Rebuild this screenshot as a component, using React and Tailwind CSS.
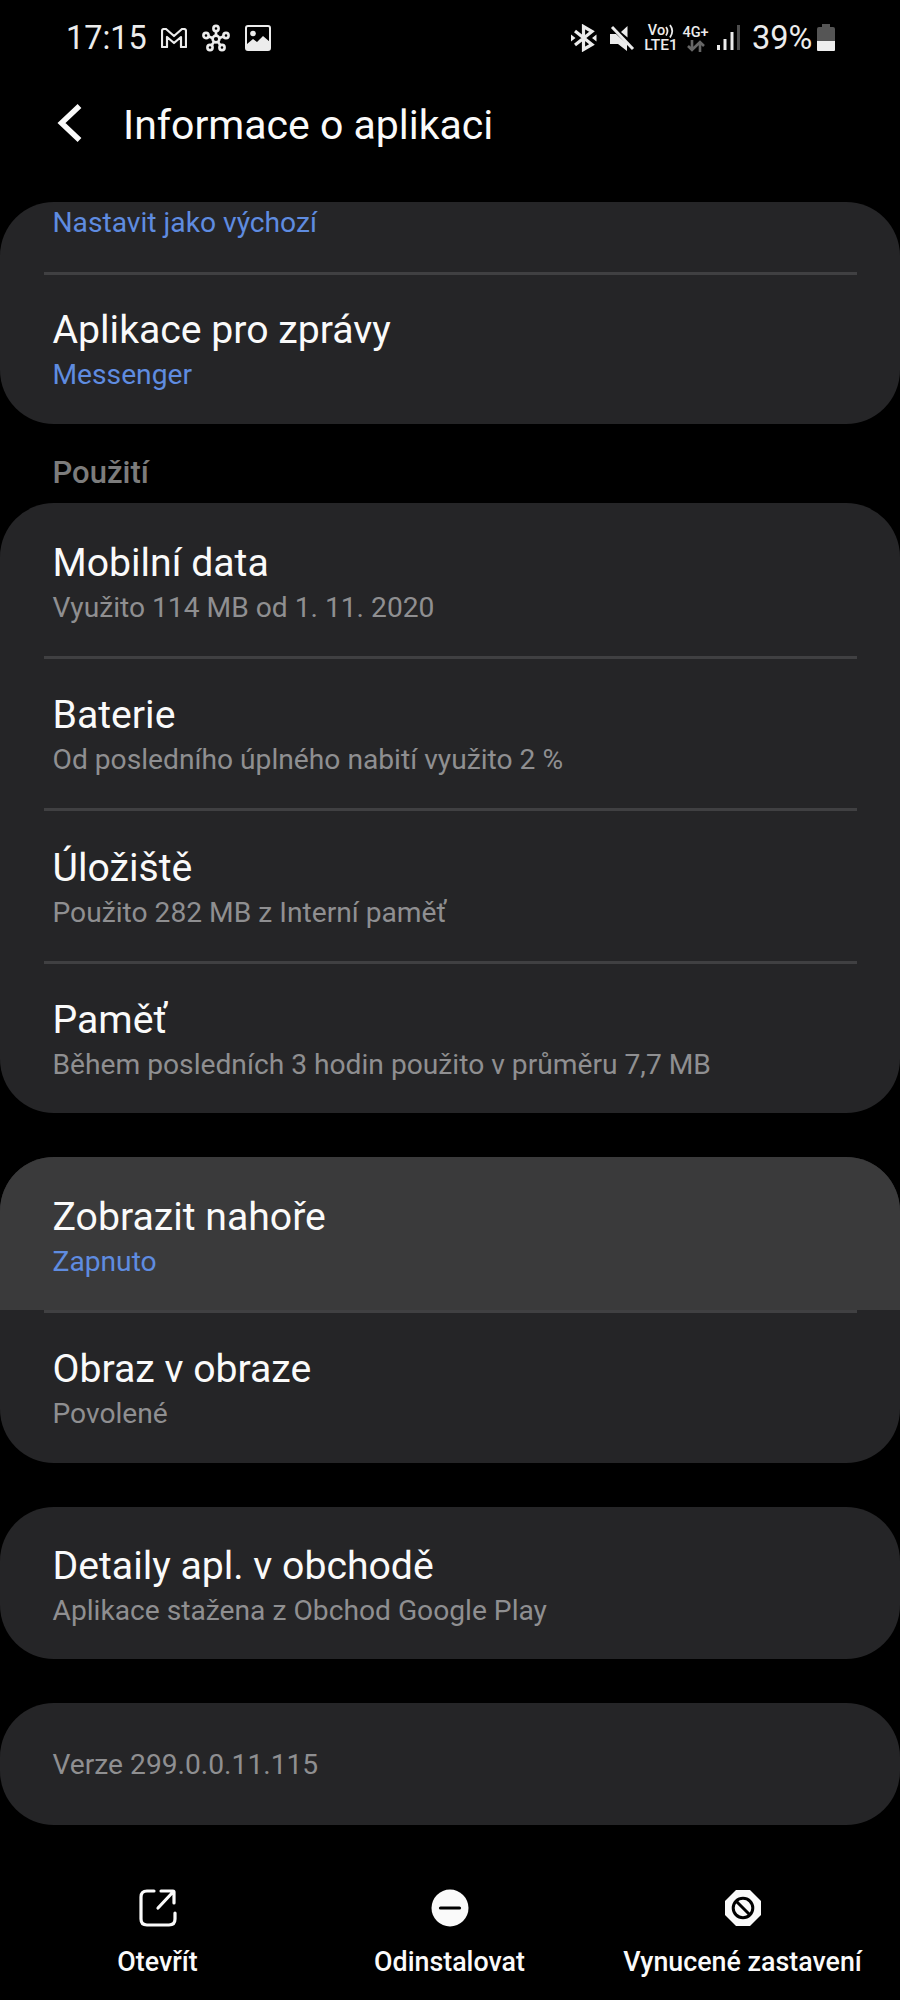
const usage = [
    { title: 'Mobilní data', sub: 'Využito 114 MB od 1. 11. 2020' },
    { title: 'Baterie', sub: 'Od posledního úplného nabití využito 2 %' },
    { title: 'Úložiště', sub: 'Použito 282 MB z Interní paměť' },
    { title: 'Paměť', sub: 'Během posledních 3 hodin použito v průměru 7,7 MB' },
]

function Card({ children, className = '' }) {
    return <section className={`w-full rounded-[54px] bg-[#252527] overflow-hidden ${className}`}>{children}</section>
}

function Divider() {
    return <div className="relative h-[3px] -mb-[3px] ml-[44px] mr-[43px] bg-[#404042]" />
}

function Row({ title, sub, blue, active, className = 'pt-[35.5px]' }) {
    return (
        <div className={`h-[152.5px] pl-[52.5px] ${className} ${active ? 'bg-[#3a3a3b]' : ''}`}>
            <div className="text-[39.2px] leading-[48px] text-[#fafafa]">{title}</div>
            <div className={`mt-px text-[28.2px] leading-[40px] ${blue ? 'text-[#5f8ce0]' : 'text-[#8f8f91]'}`}>{sub}</div>
        </div>
    )
}

function StatusBar() {
    return (
        <div className="h-[76px] flex items-center pl-[66px] pr-[65px] text-[#ececec]">
            <span className="text-[32.4px] leading-[40px] w-[95px]">17:15</span>
            <svg className="w-[26px] h-[20px]" viewBox="0 0 26 20" fill="none" stroke="currentColor" strokeWidth="2.2" strokeLinejoin="round">
                <path d="M1 3Q1 1 3 1H5L13 8L21 1H23Q25 1 25 3V19H20V9L13 15L6 9V19H1Z" />
            </svg>
            <svg className="w-[28px] h-[28px] ml-[15px]" viewBox="0 0 28 28" fill="none" stroke="currentColor" strokeWidth="2.6">
                <circle cx="14" cy="15" r="3.4" />
                <circle cx="14" cy="4.500" r="2.6" />
                <circle cx="4" cy="11.5" r="2.6" />
                <circle cx="24" cy="11.5" r="2.6" />
                <circle cx="8" cy="23.5" r="2.6" />
                <circle cx="20" cy="23.5" r="2.6" />
                <path d="M14 6.5V11.5M6 12.3L10.5 14M22 12.3L17.5 14M9.6 21.3L12 18M18.4 21.3L16 18" />
            </svg>
            <svg className="w-[26px] h-[26px] ml-[15px]" viewBox="0 0 26 26">
                <rect x="1" y="1" width="24" height="24" rx="2" fill="none" stroke="currentColor" strokeWidth="2" />
                <circle cx="8" cy="8.5" r="2.8" fill="currentColor" />
                <path d="M2 19L8 14L12 17L18 11L25 17V24H2Z" fill="currentColor" />
            </svg>
            <div className="flex-1" />
            <svg className="w-[26px] h-[28px]" viewBox="0 0 26 28" fill="none" stroke="currentColor" strokeWidth="3.2">
                <path d="M4 7L21 20.5L12.5 25.5V2.5L21 7.5L4 21" />
                <path d="M0 10.5L4.5 14L0 17.5ZM25.5 10.5L21 14L25.5 17.5Z" fill="currentColor" stroke="none" />
            </svg>
            <svg className="w-[26px] h-[27px] ml-[12px]" viewBox="0 0 26 27" fill="currentColor">
                <path d="M1 9H7L18 19V26L9 19H1Z" />
                <path d="M12 7L18.5 1V12.5Z" />
                <path d="M3 2L24 24" stroke="currentColor" strokeWidth="3" />
            </svg>
            <div className="ml-[9px] w-[34px] flex flex-col items-center font-medium">
                <div className="flex items-center h-[14px] text-[14.5px] leading-[14px]">
                    Vo
                    <svg className="w-[9px] h-[14px]" viewBox="0 0 9 14" fill="none" stroke="currentColor" strokeWidth="1.8">
                        <path d="M1 3Q4 7 1 11.5M5 1Q9.5 7 5 13.5" />
                    </svg>
                </div>
                <div className="text-[15.5px] leading-[15px]">LTE1</div>
            </div>
            <div className="ml-[4px] w-[27px] flex flex-col items-center">
                <span className="text-[14.5px] leading-[15px] font-medium">4G+</span>
                <svg className="w-[18px] h-[12px]" viewBox="0 0 18 12" fill="none" stroke="#666" strokeWidth="2.6">
                    <path d="M5 0V10M1 6L5 10L9 6M13 12V2M9 6L13 2L17 6" />
                </svg>
            </div>
            <svg className="w-[24px] h-[26px] ml-[8px]" viewBox="0 0 24 26" fill="currentColor">
                <rect x="0" y="20" width="3" height="5" />
                <rect x="6.5" y="14" width="3" height="11" />
                <rect x="13.5" y="7" width="3" height="18" />
                <rect x="20" y="0" width="3" height="25" fill="#4d4d4d" />
            </svg>
            <span className="ml-[11px] w-[60px] text-[32.5px] leading-[40px]">39%</span>
            <svg className="w-[18px] h-[28px] ml-[5px]" viewBox="0 0 18 28">
                <path d="M5 0H13V3H16Q18 3 18 5V17H0V5Q0 3 2 3H5Z" fill="#555" />
                <path d="M0 17H18V26Q18 27 17 27H1Q0 27 0 26Z" fill="#eee" />
            </svg>
        </div>
    )
}

function Action({ label, className, children }) {
    return (
        <div className={`flex flex-col items-center ${className}`}>
            <svg className="w-[38px] h-[38px]" viewBox="0 0 38 38">{children}</svg>
            <span className="mt-[19px] text-[26.8px] leading-[32px] font-medium whitespace-nowrap">{label}</span>
        </div>
    )
}

export default function App() {
    return (
        <div className="w-[900px] h-[2000px] bg-black text-[#fafafa] font-['Roboto',sans-serif] overflow-hidden flex flex-col">
            <StatusBar />
            <header className="h-[126px] flex items-start pl-[57px]">
                <svg className="w-[26px] h-[38px] mt-[28px]" viewBox="0 0 26 38" fill="none" stroke="currentColor" strokeWidth="5.5">
                    <path d="M22.5 2L4.5 19L22.5 36" />
                </svg>
                <h1 className="ml-[40px] mt-[24px] text-[41px] leading-[50px]">Informace o aplikaci</h1>
            </header>

            <Card className="h-[222px] shrink-0">
                <div className="h-[70px] pl-[52.5px] text-[28.2px] leading-[42px] text-[#5f8ce0]">Nastavit jako výchozí</div>
                <Divider />
                <Row title="Aplikace pro zprávy" sub="Messenger" blue className="pt-[34px]" />
            </Card>

            <h2 className="h-[79px] shrink-0 pt-[31px] pl-[52.5px] text-[31px] leading-[36px] font-medium text-[#7c7c7c]">Použití</h2>

            <Card className="h-[610px] shrink-0">
                {usage.map((u, i) => (
                    <div key={u.title}>
                        {i > 0 && <Divider />}
                        <Row title={u.title} sub={u.sub} />
                    </div>
                ))}
            </Card>

            <Card className="mt-[44px] h-[306px] shrink-0">
                <Row title="Zobrazit nahoře" sub="Zapnuto" blue active />
                <Divider />
                <Row title="Obraz v obraze" sub="Povolené" />
            </Card>

            <Card className="mt-[44px] h-[152px] shrink-0">
                <Row title="Detaily apl. v obchodě" sub="Aplikace stažena z Obchod Google Play" className="pt-[34.5px]" />
            </Card>

            <Card className="mt-[44px] h-[122px] shrink-0 flex items-center pt-[3px] pl-[52.5px] text-[28.2px] text-[#8f8f91]">
                Verze 299.0.0.11.115
            </Card>

            <footer className="mt-[64px] pl-px flex">
                <Action label="Otevřít" className="w-[313px]">
                    <path d="M15 2H8Q2 2 2 8V30Q2 36 8 36H30Q36 36 36 30V24M22 2H34Q35 2 35 3V14M34 3L19 19" fill="none" stroke="currentColor" strokeWidth="3.2" strokeLinecap="round" strokeLinejoin="round" />
                </Action>
                <Action label="Odinstalovat" className="w-[271px]">
                    <circle cx="19" cy="19" r="18.5" fill="currentColor" />
                    <path d="M9.5 19H28.5" stroke="#000" strokeWidth="3.2" strokeLinecap="round" />
                </Action>
                <Action label="Vynucené zastavení" className="w-[315px]">
                    <path d="M12 1H26L37 12V26L26 37H12L1 26V12Z" fill="currentColor" />
                    <circle cx="19" cy="19" r="9.8" fill="none" stroke="#000" strokeWidth="3" />
                    <path d="M12 12L26 26" stroke="#000" strokeWidth="3" />
                </Action>
            </footer>
        </div>
    )
}
